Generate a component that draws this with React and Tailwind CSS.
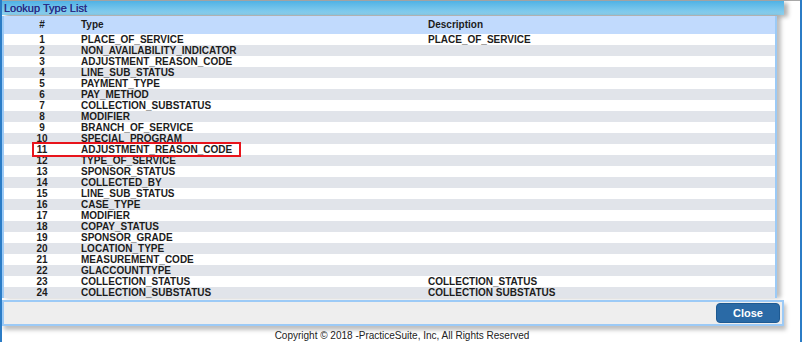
import React from "react";

const rows = [
  ["1", "PLACE_OF_SERVICE", "PLACE_OF_SERVICE"],
  ["2", "NON_AVAILABILITY_INDICATOR", ""],
  ["3", "ADJUSTMENT_REASON_CODE", ""],
  ["4", "LINE_SUB_STATUS", ""],
  ["5", "PAYMENT_TYPE", ""],
  ["6", "PAY_METHOD", ""],
  ["7", "COLLECTION_SUBSTATUS", ""],
  ["8", "MODIFIER", ""],
  ["9", "BRANCH_OF_SERVICE", ""],
  ["10", "SPECIAL_PROGRAM", ""],
  ["11", "ADJUSTMENT_REASON_CODE", ""],
  ["12", "TYPE_OF_SERVICE", ""],
  ["13", "SPONSOR_STATUS", ""],
  ["14", "COLLECTED_BY", ""],
  ["15", "LINE_SUB_STATUS", ""],
  ["16", "CASE_TYPE", ""],
  ["17", "MODIFIER", ""],
  ["18", "COPAY_STATUS", ""],
  ["19", "SPONSOR_GRADE", ""],
  ["20", "LOCATION_TYPE", ""],
  ["21", "MEASUREMENT_CODE", ""],
  ["22", "GLACCOUNTTYPE", ""],
  ["23", "COLLECTION_STATUS", "COLLECTION_STATUS"],
  ["24", "COLLECTION_SUBSTATUS", "COLLECTION SUBSTATUS"],
];

export default function App() {
  return (
    <div
      className="w-[802px] h-[342px] bg-white overflow-hidden flex border-l-2 border-l-[#2b7cc6]"
      style={{ fontFamily: '"Liberation Sans", Arial, sans-serif' }}
    >
      <div className="w-[798px] flex flex-col">
        <div className="h-px bg-[#a8a8a8] w-[798px]" />
        <div className="flex">
          <div className="w-[782px] h-[14px] bg-gradient-to-b from-[#4fb2e5] to-[#8fd2ef] flex items-center pl-[2px] text-[11px] leading-[14px] text-[#2a2d86] [text-shadow:0_0_0.4px_#2a2d86] shadow-[4px_2px_4px_rgba(0,0,0,0.3)]">
            Lookup Type List
          </div>
        </div>
        <div className="w-[775px] mt-px border-l-2 border-r-2 border-[#9ccaf6] text-[10px] font-bold text-[#1c1c1c] shadow-[4px_0_4px_rgba(0,0,0,0.25)]">
          <div className="flex h-[18px] items-center bg-[#c1dafd] leading-[18px]">
            <div className="w-[76px] text-center">#</div>
            <div className="w-[348px] pl-px">Type</div>
            <div className="flex-1">Description</div>
          </div>
          {rows.map((r, i) => (
            <div
              key={r[0]}
              className={`relative flex h-[11px] leading-[11px] ${i % 2 === 0 ? "bg-white" : "bg-[#e1e4ea]"}`}
            >
              <div className="w-[76px] text-center">{r[0]}</div>
              <div className="w-[348px] pl-px">{r[1]}</div>
              <div className="flex-1">{r[2]}</div>
              {r[0] === "11" && (
                <span className="absolute z-10 left-[28px] top-[-2px] w-[209px] h-[15px] border-2 border-[#e8141c]" />
              )}
            </div>
          ))}
        </div>
        <div className="w-[782px] h-[26px] mt-[2px] bg-[#eeeeee] border-2 border-[#9ccaf6] flex items-center justify-end pr-[2px] shadow-[2px_4px_4px_rgba(0,0,0,0.25)]">
          <button className="w-[64px] h-[20px] rounded-[4px] bg-[#2a6aa6] border border-[#1e5a92] text-white text-[11px] font-bold leading-[18px]">
            Close
          </button>
        </div>
        <div className="text-center text-[10px] leading-[12px] text-[#222] mt-[4px] pl-[2px]">
          Copyright © 2018 -PracticeSuite, Inc, All Rights Reserved
        </div>
      </div>
      <div className="w-[2px] h-full bg-[#2b7cc6]" />
    </div>
  );
}
